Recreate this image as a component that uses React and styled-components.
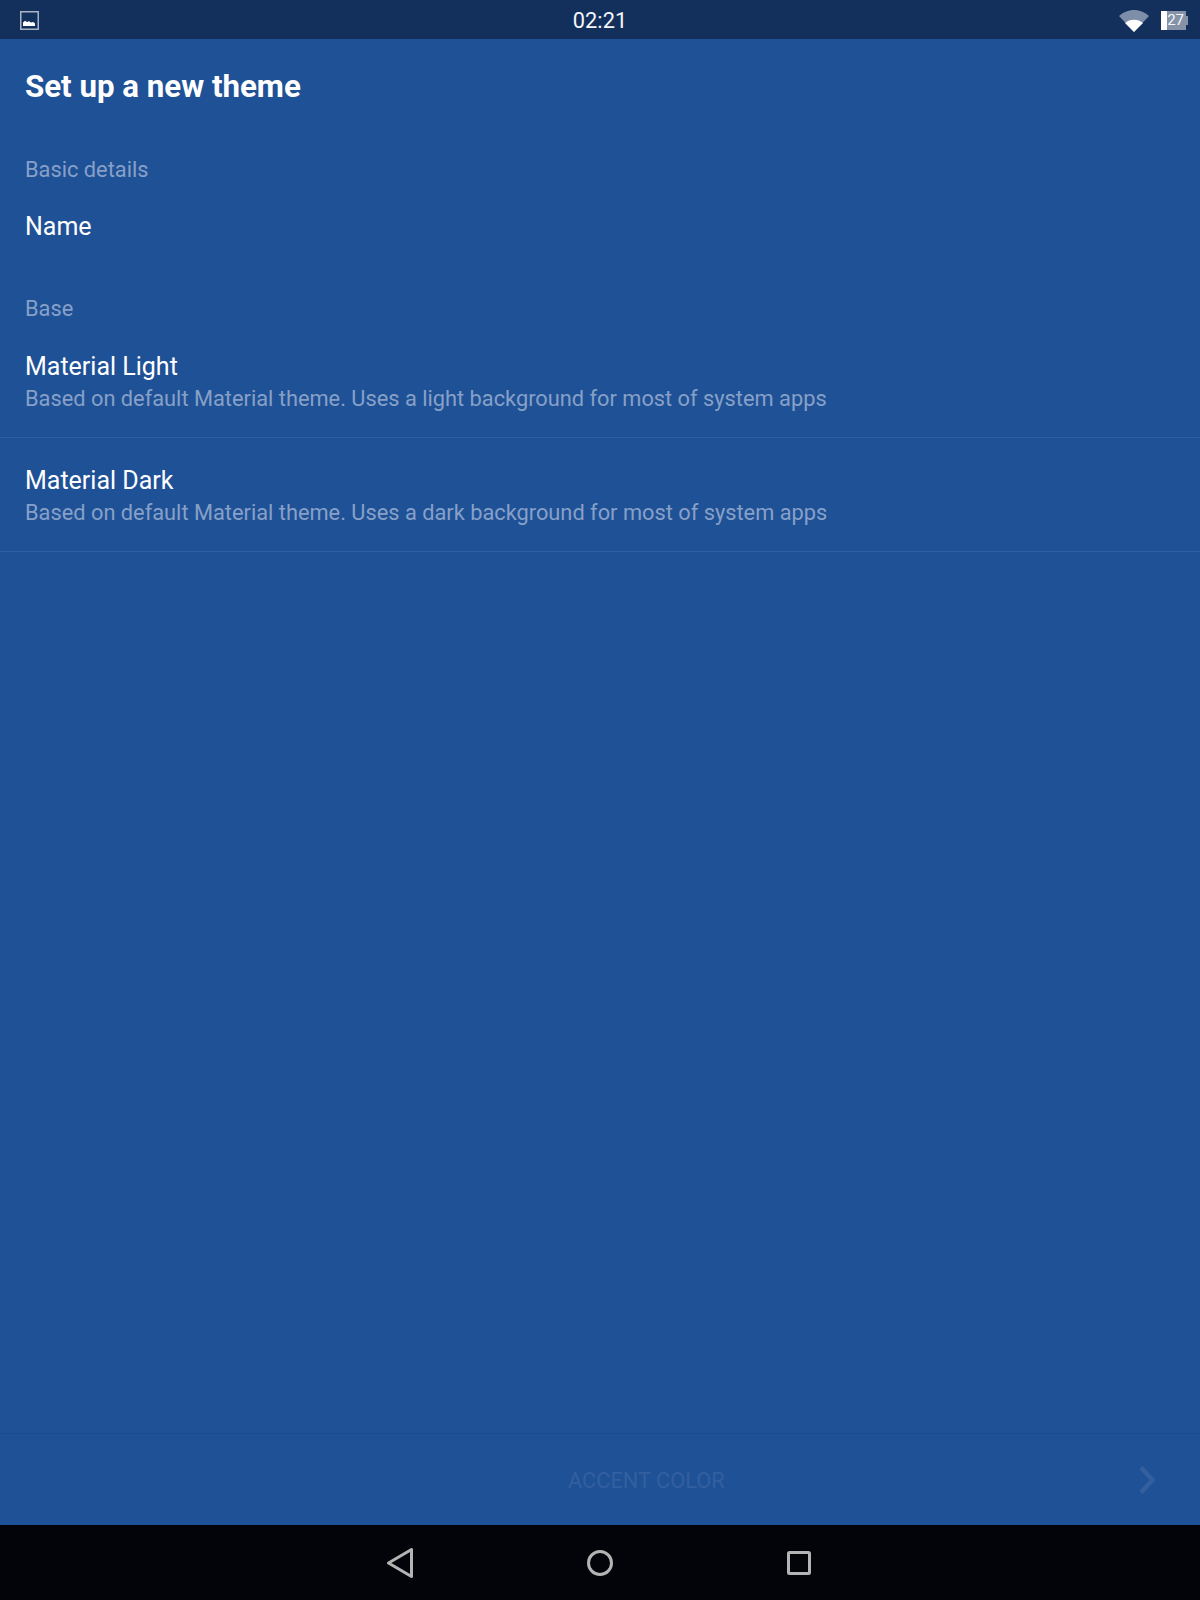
import React from 'react';
import styled, { createGlobalStyle } from 'styled-components';

const GlobalStyle = createGlobalStyle`
  html, body {
    margin: 0;
    padding: 0;
    background: #1f5196;
  }
  * {
    box-sizing: border-box;
  }
`;

const Screen = styled.div`
  width: 1200px;
  height: 1600px;
  display: flex;
  flex-direction: column;
  background: #1f5196;
  font-family: Roboto, "Liberation Sans", sans-serif;
  color: #fff;
`;

const StatusBar = styled.div`
  height: 39px;
  flex: none;
  display: grid;
  grid-template-columns: 1fr auto 1fr;
  align-items: center;
  padding: 0 12px;
  background: #132f5c;
`;

const StatusLeft = styled.div`
  display: flex;
  align-items: center;
  padding-left: 8px;
`;

const StatusRight = styled.div`
  display: flex;
  align-items: center;
  justify-content: flex-end;
  gap: 12px;
`;

const Clock = styled.div`
  font-size: 21.8px;
  line-height: 41px;
  color: #f4f6fa;
`;

const Content = styled.main`
  flex: 1;
  padding-top: 26px;
`;

const Title = styled.h1`
  margin: 0;
  padding: 0 25px;
  font-size: 31.25px;
  line-height: 44px;
  font-weight: 700;
`;

const SectionLabel = styled.div`
  padding: 0 25px;
  font-size: 21.8px;
  line-height: 28px;
  color: #87a0c8;
  margin-top: ${(p) => p.$top}px;
`;

const NameRow = styled.div`
  padding: 0 25px;
  margin-top: 28px;
  font-size: 25px;
  line-height: 30px;
`;

const OptionList = styled.div`
  padding-top: 1px;
`;

const Option = styled.div`
  height: 114px;
  padding: 27px 25px 0;
  border-bottom: 1px solid #2f60a3;
  display: flex;
  flex-direction: column;
`;

const OptionName = styled.div`
  font-size: 25px;
  line-height: 32px;
  margin-bottom: 1px;
`;

const OptionSummary = styled.div`
  font-size: 21.8px;
  line-height: 30px;
  color: #87a0c8;
`;

const BottomBar = styled.div`
  height: 92px;
  flex: none;
  display: flex;
  align-items: center;
  justify-content: space-between;
  padding: 0 44px 0 568px;
  border-top: 1px solid #1c4b8c;
`;

const NextLabel = styled.span`
  font-size: 21.8px;
  line-height: 28px;
  padding-top: 2px;
  color: #335f9f;
`;

const NavBar = styled.nav`
  height: 75px;
  flex: none;
  display: flex;
  align-items: center;
  justify-content: center;
  gap: 174px;
  padding-right: 2px;
  background: #02040a;
`;

const Battery = styled.div`
  position: relative;
  width: 25px;
  height: 19px;
  margin-right: 2px;
  background: linear-gradient(to right, #fff 0 6px, #8592a8 6px);
  font-size: 15px;
  line-height: 19px;
  text-align: right;
  padding-right: 2px;
  color: #f4f6fa;
  &::after {
    content: '';
    position: absolute;
    right: -2px;
    top: 5px;
    width: 2px;
    height: 9px;
    background: #8592a8;
  }
`;

function PictureIcon() {
  return (
    <svg width="19" height="19" viewBox="0 0 19 19">
      <rect x="0.75" y="0.75" width="17.5" height="17.5" fill="none" stroke="#a9b3c4" strokeWidth="1.5" />
      <path d="M3 15v-3.5l2-1.800 2 1.200 2-.6 2 1.200 2-.6 2 1.400V15z" fill="#fff" />
    </svg>
  );
}

function WifiIcon() {
  return (
    <svg width="30" height="22" viewBox="0 0 30 22">
      <path d="M0 6C4 2.400 9.200 0 15 0s11 2.400 15 6L15 22z" fill="#7d8ea8" />
      <path d="M6 13C8.400 10.900 11.500 9.700 15 9.700s6.600 1.200 9 3.300L15 22z" fill="#fff" />
    </svg>
  );
}

function BackIcon() {
  return (
    <svg width="26" height="30" viewBox="0 0 26 30">
      <path d="M24.500 1.500V28.500L1.500 15z" fill="none" stroke="#b4b4b4" strokeWidth="3" strokeLinejoin="round" />
    </svg>
  );
}

function HomeIcon() {
  return (
    <svg width="26" height="26" viewBox="0 0 26 26">
      <circle cx="13" cy="13" r="11.500" fill="none" stroke="#b4b4b4" strokeWidth="3" />
    </svg>
  );
}

function RecentIcon() {
  return (
    <svg width="24" height="24" viewBox="0 0 24 24">
      <rect x="1.500" y="1.500" width="21" height="21" rx="1" fill="none" stroke="#b4b4b4" strokeWidth="3" />
    </svg>
  );
}

function ChevronIcon() {
  return (
    <svg width="18" height="28" viewBox="0 0 18 28">
      <path d="M3 1.500L14.500 14 3 26.500" fill="none" stroke="#335f9f" strokeWidth="4.500" />
    </svg>
  );
}

const summary = (kind) =>
  `Based on default Material theme. Uses a ${kind} background for most of system apps`;

export default function App() {
  return (
    <>
      <GlobalStyle />
      <Screen>
        <StatusBar>
          <StatusLeft>
            <PictureIcon />
          </StatusLeft>
          <Clock>02:21</Clock>
          <StatusRight>
            <WifiIcon />
            <Battery>27</Battery>
          </StatusRight>
        </StatusBar>

        <Content>
          <Title>Set up a new theme</Title>
          <SectionLabel $top={47}>Basic details</SectionLabel>
          <NameRow>Name</NameRow>
          <SectionLabel $top={53}>Base</SectionLabel>
          <OptionList>
            <Option>
              <OptionName>Material Light</OptionName>
              <OptionSummary>{summary('light')}</OptionSummary>
            </Option>
            <Option>
              <OptionName>Material Dark</OptionName>
              <OptionSummary>{summary('dark')}</OptionSummary>
            </Option>
          </OptionList>
        </Content>

        <BottomBar>
          <NextLabel>ACCENT COLOR</NextLabel>
          <ChevronIcon />
        </BottomBar>

        <NavBar>
          <BackIcon />
          <HomeIcon />
          <RecentIcon />
        </NavBar>
      </Screen>
    </>
  );
}
